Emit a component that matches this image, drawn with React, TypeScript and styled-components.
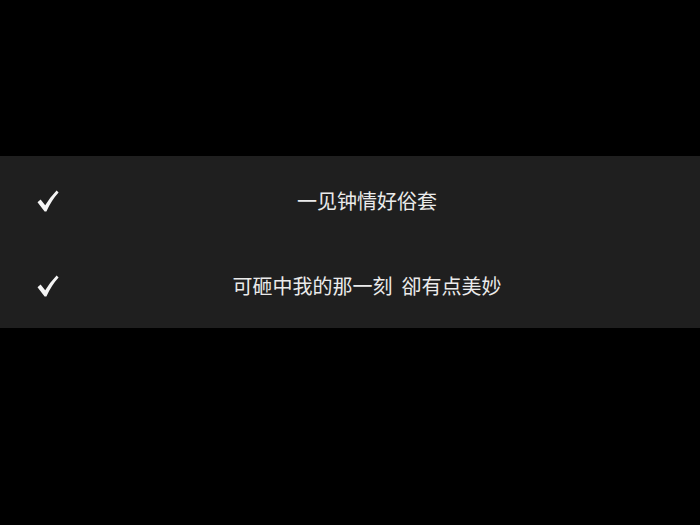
import React from "react";
import styled, { createGlobalStyle } from "styled-components";

const GlobalStyle = createGlobalStyle`
  html, body {
    margin: 0;
    padding: 0;
    background: #000;
  }
  body {
    font-family: "Noto Sans CJK SC", "Noto Sans", sans-serif;
  }
`;

const Screen = styled("div")`
  width: 700px;
  height: 525px;
  background: #000;
  display: flex;
  flex-direction: column;
  padding-top: 156px;
  box-sizing: border-box;
`;

const Panel = styled("div")`
  background: #1f1f1f;
  display: flex;
  flex-direction: column;
  padding: 2px 0 0;
`;

const Row = styled("div")`
  height: 85px;
  display: flex;
  align-items: center;
  padding: 0 26px 0 36px;
`;

const CheckBox = styled("div")`
  width: 24px;
  height: 24px;
  display: flex;
  align-items: center;
  justify-content: center;
`;

const Lyric = styled("div")`
  flex: 1;
  text-align: center;
  color: #ebebeb;
  font-size: 20px;
  line-height: 24px;
  letter-spacing: 0;
  white-space: pre;
`;

const Check = () => (
  <svg width="24" height="24" viewBox="0 0 24 24">
    <path
      d="M1.5 13.2 L4.6 10.6 L9.2 16.2 Q14 8.5 20.6 1.6 L22.6 3.4 Q15.2 11.5 10.4 22.4 L8.6 22.4 Z"
      fill="#f4f4f4"
    />
  </svg>
);

const lines = ["一见钟情好俗套", "可砸中我的那一刻  卻有点美妙"];

const App = () => {
  return (
    <>
      <GlobalStyle />
      <Screen>
        <Panel>
          {lines.map((line) => (
            <Row key={line}>
              <CheckBox>
                <Check />
              </CheckBox>
              <Lyric>{line}</Lyric>
            </Row>
          ))}
        </Panel>
      </Screen>
    </>
  );
};

export default App;
